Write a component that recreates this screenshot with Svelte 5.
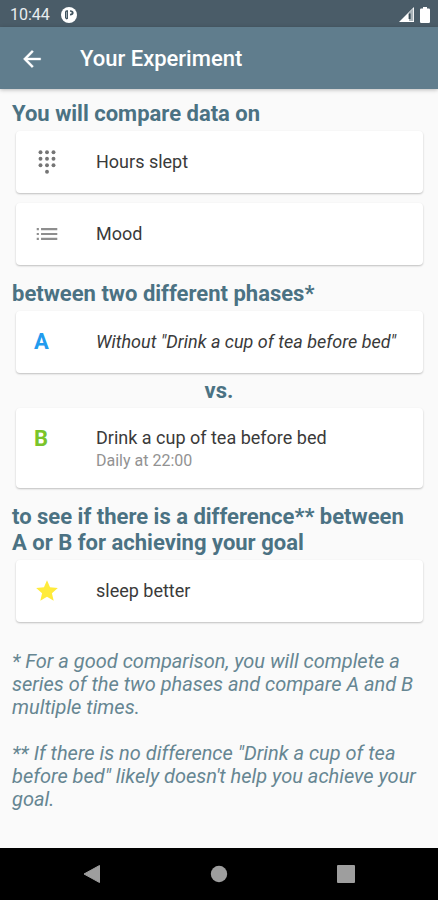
<script>
  const measures = [
    { icon: 'dialpad', label: 'Hours slept' },
    { icon: 'list', label: 'Mood' }
  ];
  const dots = [
    [6, 3], [12, 3], [18, 3],
    [6, 9], [12, 9], [18, 9],
    [6, 15], [12, 15], [18, 15],
    [12, 21]
  ];
</script>

<div class="screen">
  <div class="status">
    <span class="time">10:44</span>
    <svg class="notice" width="16" height="16" viewBox="0 0 16 16" aria-hidden="true">
      <circle cx="8" cy="8" r="8" fill="#fff" />
      <path d="M4 5q0-1.800 1.800-1.800H7v8.600l-1.500.8L4 11z" fill="#3f525e" />
      <path d="M5.600 4.800v6" stroke="#b4bec4" stroke-width=".9" />
      <path d="M9 3.200q3.600 0 3.600 2.600T9 8.400z" fill="#3f525e" />
      <circle cx="9.600" cy="5.800" r="1" fill="#fff" />
    </svg>
    <span class="spacer"></span>
    <svg width="15" height="15" viewBox="0 0 15 15" aria-hidden="true">
      <path d="M0 15 15 0v15z" fill="#fff" />
      <path d="M10 5.600 14.200 1.600V14H10z" fill="#a9b3b9" />
      <path d="M9.600 6.500h2v5.500h-2z" fill="#384a55" />
    </svg>
    <svg class="battery" width="10" height="16" viewBox="0 0 10 16" aria-hidden="true">
      <path d="M3 0h4v1.600h1.800q1.200 0 1.200 1.200v12q0 1.200-1.200 1.200H1.200Q0 16 0 14.800V2.800Q0 1.600 1.200 1.600H3z" fill="#fff" />
    </svg>
  </div>

  <header>
    <button class="back" aria-label="Back">
      <svg width="26" height="26" viewBox="0 0 24 24" aria-hidden="true">
        <path d="M20 11H7.830l5.590-5.590L12 4l-8 8 8 8 1.410-1.410L7.830 13H20z" fill="#fff" stroke="#fff" stroke-width=".3" />
      </svg>
    </button>
    <h1>Your Experiment</h1>
  </header>

  <main>
    <section>
      <h2>You will compare data on</h2>
      {#each measures as item}
        <div class="card">
          <div class="lead">
            {#if item.icon === 'dialpad'}
              <svg width="26" height="26" viewBox="0 0 24 24" aria-hidden="true">
                {#each dots as [x, y]}
                  <circle cx={x} cy={y} r="1.800" fill="#757575" />
                {/each}
              </svg>
            {:else}
              <svg width="26" height="26" viewBox="0 0 24 24" aria-hidden="true">
                <path d="M2.500 6.500h2v2h-2zM2.500 11h2v2h-2zM2.500 15.500h2v2h-2zM6.500 6.500h15v2h-15zM6.500 11h15v2h-15zM6.500 15.500h15v2h-15z" fill="#8e8e8e" />
              </svg>
            {/if}
          </div>
          <p>{item.label}</p>
        </div>
      {/each}
    </section>

    <section>
      <h2>between two different phases*</h2>
      <div class="card">
        <div class="lead letter a">A</div>
        <p><em>Without "Drink a cup of tea before bed"</em></p>
      </div>
      <h2 class="versus">vs.</h2>
      <div class="card tall">
        <div class="lead letter b">B</div>
        <div>
          <p>Drink a cup of tea before bed</p>
          <p class="sub">Daily at 22:00</p>
        </div>
      </div>
    </section>

    <section>
      <h2>to see if there is a difference** between A or B for achieving your goal</h2>
      <div class="card">
        <div class="lead">
          <svg width="26" height="26" viewBox="0 0 24 24" aria-hidden="true">
            <path d="M12 17.270 18.180 21l-1.640-7.030L22 9.240l-7.190-.610L12 2 9.190 8.630 2 9.240l5.460 4.730L5.820 21z" fill="#ffeb3b" />
          </svg>
        </div>
        <p>sleep better</p>
      </div>
    </section>

    <div class="notes">
      <p>* For a good comparison, you will complete a series of the two phases and compare A and B multiple times.</p>
      <p>** If there is no difference "Drink a cup of tea before bed" likely doesn't help you achieve your goal.</p>
    </div>
  </main>

  <nav>
    <button aria-label="Back">
      <svg width="18" height="18" viewBox="0 0 18 18" aria-hidden="true"><path d="M1 9 16.500.500v17z" fill="#9e9e9e" stroke="#9e9e9e" stroke-linejoin="round" /></svg>
    </button>
    <button aria-label="Home">
      <svg width="18" height="18" viewBox="0 0 18 18" aria-hidden="true"><circle cx="9" cy="9" r="8.200" fill="#9e9e9e" /></svg>
    </button>
    <button aria-label="Recent apps">
      <svg width="18" height="18" viewBox="0 0 18 18" aria-hidden="true"><rect width="18" height="18" rx="1" fill="#9e9e9e" /></svg>
    </button>
  </nav>
</div>

<style>
  .screen {
    display: flex;
    flex-direction: column;
    min-height: 100vh;
    background: #fafafa;
    font-family: Roboto, "Liberation Sans", sans-serif;
  }
  h1, h2, p { margin: 0; }
  svg { display: block; }
  button {
    display: grid;
    place-items: center;
    padding: 0;
    border: 0;
    background: none;
  }
  .status {
    display: flex;
    align-items: center;
    height: 27px;
    padding: 2px 8px 0 10px;
    box-sizing: border-box;
    background: #4a5c68;
    color: #e8edf0;
  }
  .time { font-size: 16px; }
  .notice { margin-left: 11px; }
  .spacer { flex: 1; }
  .battery { margin-left: 6px; }
  header {
    display: flex;
    align-items: center;
    height: 62px;
    padding: 2px 8px 0;
    box-sizing: border-box;
    background: #607d8d;
    box-shadow: 0 1px 4px rgba(0, 0, 0, .25);
    color: #fff;
  }
  .back { width: 48px; height: 48px; }
  h1 {
    margin-left: 24px;
    font-size: 22px;
    font-weight: 500;
    line-height: 26px;
  }
  main { flex: 1; padding: 12px; }
  section { display: flow-root; margin-bottom: 6px; }
  h2 {
    padding-right: 8px;
    color: #4b7283;
    font-size: 22px;
    font-weight: 700;
    line-height: 26px;
  }
  .versus { padding: 0; text-align: center; }
  .card {
    display: flex;
    align-items: center;
    min-height: 62px;
    margin: 4px 3px 10px 4px;
    border-radius: 4px;
    background: #fff;
    box-shadow: 0 1px 2px rgba(0, 0, 0, .24);
  }
  .card:has(+ .versus) { margin-bottom: 5px; }
  .lead { width: 62px; margin-left: 18px; }
  .card p {
    color: #3a3a3a;
    font-size: 18px;
    line-height: 24px;
  }
  .card .sub {
    color: #929292;
    font-size: 16px;
    line-height: 22px;
  }
  .letter { font-size: 22px; font-weight: 700; line-height: 26px; }
  .a { color: #229bee; }
  .b { color: #7bc42a; }
  .tall { align-items: flex-start; min-height: 0; padding: 18px 0 16px; }
  .notes {
    display: grid;
    gap: 23px;
    padding-top: 12px;
    color: #668692;
    font-size: 20px;
    font-style: italic;
    line-height: 23px;
  }
  nav {
    display: flex;
    justify-content: space-between;
    height: 52px;
    padding: 0 68px;
    background: #000;
  }
  nav button { width: 48px; }
</style>
